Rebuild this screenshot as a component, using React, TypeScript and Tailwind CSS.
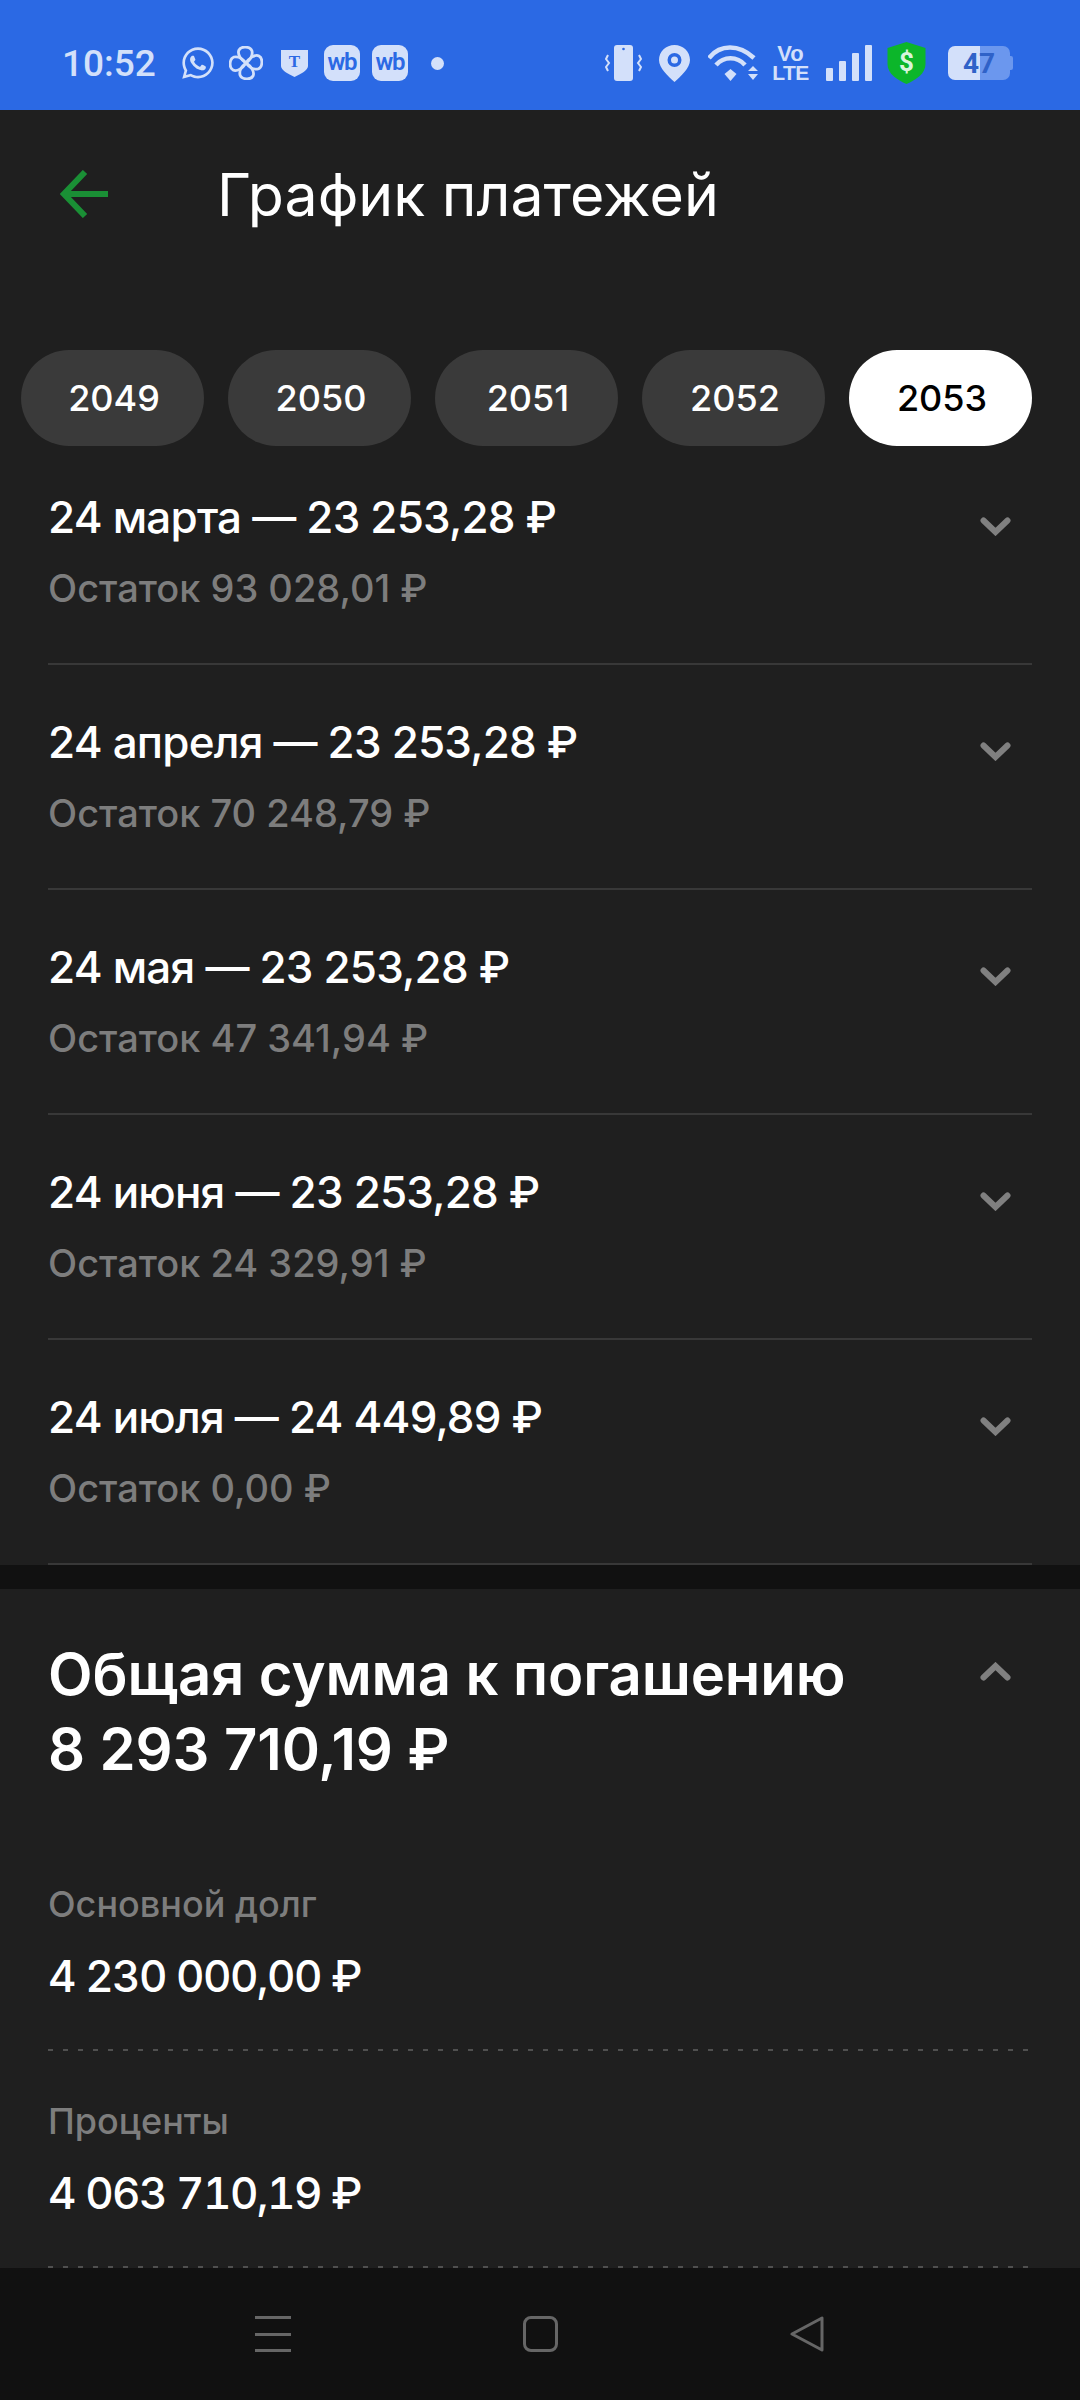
import { FaWhatsapp } from "react-icons/fa";

const years = ["2049", "2050", "2051", "2052", "2053"];

const payments = [
  { title: "24 марта — 23 253,28 ₽", rest: "Остаток 93 028,01 ₽" },
  { title: "24 апреля — 23 253,28 ₽", rest: "Остаток 70 248,79 ₽" },
  { title: "24 мая — 23 253,28 ₽", rest: "Остаток 47 341,94 ₽" },
  { title: "24 июня — 23 253,28 ₽", rest: "Остаток 24 329,91 ₽" },
  { title: "24 июля — 24 449,89 ₽", rest: "Остаток 0,00 ₽" },
];

const petal = "M17 17C12 14 8 8 10 4 12 0 21 0 23 5 24 10 21 14 17 17Z";

function WbBadge() {
  return (
    <div className="w-[36px] h-[36px] rounded-[9px] bg-[#d3e0fa] flex items-center justify-center text-[#2b69e4] text-[24px] font-semibold leading-none tracking-[-1px] pb-[3px]">
      wb
    </div>
  );
}

function Chevron({ className, up }: { className: string; up?: boolean }) {
  return (
    <svg className={className} width="31" height="19" viewBox="0 0 31 19" fill="none" stroke="#808080" strokeWidth="6" strokeLinecap="round">
      <path d={up ? "M3.500 15.500L15.500 4 27.500 15.500" : "M3.500 3.500L15.500 15 27.500 3.500"} />
    </svg>
  );
}

function StatusBar() {
  return (
    <div className="h-[110px] bg-[#2b69e4] flex items-center text-[#d3e0fa] pl-[62px] pt-[16px] font-['Roboto',sans-serif]">
      <span className="text-[37px] font-medium leading-none w-[93px]">10:52</span>
      <FaWhatsapp className="ml-[25px] w-[36px] h-[36px]" />
      {/* вертушка */}
      <svg className="ml-[13px]" width="34" height="34" viewBox="0 0 34 34" fill="none" stroke="currentColor" strokeWidth="2.800" strokeLinejoin="round">
        <path d={petal} />
        <path d={petal} transform="rotate(90 17 17)" />
        <path d={petal} transform="rotate(180 17 17)" />
        <path d={petal} transform="rotate(270 17 17)" />
      </svg>
      <svg className="ml-[18px]" width="27" height="28" viewBox="0 0 27 28">
        <path d="M0 1H27V17C27 21 20 25 13.500 28 7 25 0 21 0 17Z" fill="currentColor" />
        <text x="13.500" y="18" textAnchor="middle" fontSize="17" fontWeight="900" fill="#2b69e4" fontFamily="Liberation Serif, serif">T</text>
      </svg>
      <div className="ml-[16px]"><WbBadge /></div>
      <div className="ml-[12px]"><WbBadge /></div>
      <div className="ml-[23px] w-[13px] h-[13px] rounded-full bg-[#d3e0fa]" />

      <svg className="ml-[161px]" width="37" height="36" viewBox="0 0 37 36" fill="currentColor">
        <rect x="9" y="0" width="19" height="36" rx="3" />
        <circle cx="18.500" cy="4" r="1.300" fill="#2b69e4" />
        <path d="M3 10L1 14 4 18 1 22 3 26M34 10L36 14 33 18 36 22 34 26" fill="none" stroke="currentColor" strokeWidth="2" />
      </svg>
      <svg className="ml-[17px]" width="31" height="37" viewBox="0 0 31 37">
        <path fillRule="evenodd" fill="currentColor" d="M15.500 0C24 0 31 6.500 31 15 31 23 22 31 15.500 37 9 31 0 23 0 15 0 6.500 7 0 15.500 0ZM15.500 8A7 7 0 1 0 15.500 22 7 7 0 1 0 15.500 8ZM15.500 11.500A3.500 3.500 0 1 1 15.500 18.500 3.500 3.500 0 1 1 15.500 11.500Z" />
      </svg>
      <svg className="ml-[18px]" width="50" height="36" viewBox="0 0 50 36" fill="none" stroke="currentColor">
        <path d="M1 13C12 -1 31 -1 46 13" strokeWidth="4.500" />
        <path d="M8 20C16 11 29 11 37 20" strokeWidth="4.500" />
        <path d="M16.500 29L22.500 24 28.500 29 22.500 36Z" fill="currentColor" stroke="none" />
        <path d="M40 26L45 21 50 26ZM40 29H50L45 35Z" fill="currentColor" stroke="none" />
      </svg>
      <svg className="ml-[16px] overflow-visible" width="33" height="36" viewBox="0 0 33 36" fill="currentColor" fontFamily="Liberation Sans, sans-serif" fontWeight="700">
        <text x="16.500" y="16" textAnchor="middle" fontSize="22">Vo</text>
        <text x="16.500" y="35" textAnchor="middle" fontSize="21" letterSpacing="-0.5">LTE</text>
      </svg>
      <div className="ml-[19px] flex items-end gap-[6px] h-[36px]">
        <div className="w-[7px] h-[13px] rounded-[1px] bg-[#d3e0fa]" />
        <div className="w-[7px] h-[20px] rounded-[1px] bg-[#d3e0fa]" />
        <div className="w-[7px] h-[28px] rounded-[1px] bg-[#d3e0fa]" />
        <div className="w-[7px] h-[36px] rounded-[1px] bg-[#d3e0fa]" />
      </div>
      <svg className="ml-[15px]" width="39" height="42" viewBox="0 0 38 42">
        <path d="M19 0L38 6V22C38 32 28 38 19 42 10 38 0 32 0 22V6Z" fill="#0cb62a" />
        <text x="19" y="29" textAnchor="middle" fontSize="26" fontWeight="700" fill="#d8f5dc" fontFamily="Roboto, sans-serif">$</text>
      </svg>
      <div className="ml-[22px] relative w-[65px] h-[34px] flex">
        <div className="w-[32px] h-full rounded-l-[7px] bg-[#d3e0fa]" />
        <div className="w-[30px] h-full rounded-r-[7px] bg-[#6b97ee]" />
        <div className="w-[3px] h-[14px] self-center rounded-r-[2px] bg-[#6b97ee]" />
        <span className="absolute left-[15px] top-[4px] text-[28px] font-bold leading-none text-[#2f62c8]">47</span>
      </div>
    </div>
  );
}

function Header() {
  return (
    <div className="h-[240px] pt-[53px] flex items-start bg-[#1f1f1f]">
      <svg className="ml-[60px] mt-[7px]" width="48" height="48" viewBox="0 0 48 48" fill="none" stroke="#1a8f35" strokeWidth="6">
        <path d="M48 24H4M25 2L4 24 25 46" />
      </svg>
      <h1 className="ml-[109px] text-[59px] leading-[64px] font-normal text-white">График платежей</h1>
    </div>
  );
}

function YearTabs() {
  return (
    <div className="flex gap-[24px] pl-[21px] h-[96px]">
      {years.map((y) => (
        <div
          key={y}
          className={
            y === "2053"
              ? "w-[183px] pl-[3px] rounded-full bg-white text-black flex items-center justify-center text-[36px] font-medium"
              : "w-[183px] pl-[3px] rounded-full bg-[#3a3a3a] text-white flex items-center justify-center text-[36px] font-medium"
          }
        >
          {y}
        </div>
      ))}
    </div>
  );
}

function PaymentRow({ title, rest, first }: { title: string; rest: string; first?: boolean }) {
  return (
    <div className={first ? "h-[176px] border-b-[2px] border-[#383838] relative" : "h-[225px] pt-[49px] border-b-[2px] border-[#383838] relative"}>
      <div className="text-[44px] leading-[56px] font-medium tracking-[-0.8px] text-white">{title}</div>
      <div className="mt-[21px] text-[38px] leading-[44px] font-medium text-[#7d7d7d]">{rest}</div>
      <Chevron className={first ? "absolute right-[21px] top-[28px]" : "absolute right-[21px] top-[77px]"} />
    </div>
  );
}

function Detail({ label, value }: { label: string; value: string }) {
  return (
    <div className="h-[217px] pt-[48px] relative">
      <div className="text-[36px] leading-[44px] font-medium text-[#7d7d7d]">{label}</div>
      <div className="mt-[22px] text-[44px] leading-[56px] font-medium tabular-nums tracking-[-1.6px] text-white">{value}</div>
      <div className="absolute left-0 right-0 bottom-0 h-[2px] bg-[repeating-linear-gradient(90deg,#505050_0,#505050_5px,transparent_5px,transparent_15px)]" />
    </div>
  );
}

export default function App() {
  return (
    <div className="w-[1080px] h-[2400px] bg-[#1f1f1f] overflow-hidden flex flex-col font-['Inter',sans-serif]">
      <StatusBar />
      <Header />
      <YearTabs />
      <div className="mx-[48px] mt-[43px]">
        {payments.map((p, i) => (
          <PaymentRow key={p.title} title={p.title} rest={p.rest} first={i === 0} />
        ))}
      </div>
      <div className="h-[24px] bg-[#111111]" />
      <div className="flex-1 min-h-0 px-[48px] pt-[48px] relative">
        <div className="text-[58px] leading-[75px] font-semibold tracking-[-0.1px] text-white">
          Общая сумма к погашению
          <br />
          8 293 710,19 ₽
        </div>
        <Chevron up className="absolute right-[69px] top-[73px]" />
        <div className="mt-[47px]">
          <Detail label="Основной долг" value="4 230 000,00 ₽" />
          <Detail label="Проценты" value="4 063 710,19 ₽" />
        </div>
      </div>
      <div className="h-[132px] shrink-0 bg-[#111111] flex items-start pt-[48px] pl-[255px]">
        <div className="w-[36px] h-[36px] flex flex-col justify-between">
          <div className="h-[3px] bg-[#666666]" />
          <div className="h-[3px] bg-[#666666]" />
          <div className="h-[3px] bg-[#666666]" />
        </div>
        <div className="ml-[232px] w-[35px] h-[36px] rounded-[8px] border-[3px] border-[#666666]" />
        <svg className="ml-[232px]" width="34" height="36" viewBox="0 0 34 36" fill="none" stroke="#666666" strokeWidth="3" strokeLinejoin="round">
          <path d="M32 2V34L2 18Z" />
        </svg>
      </div>
    </div>
  );
}
